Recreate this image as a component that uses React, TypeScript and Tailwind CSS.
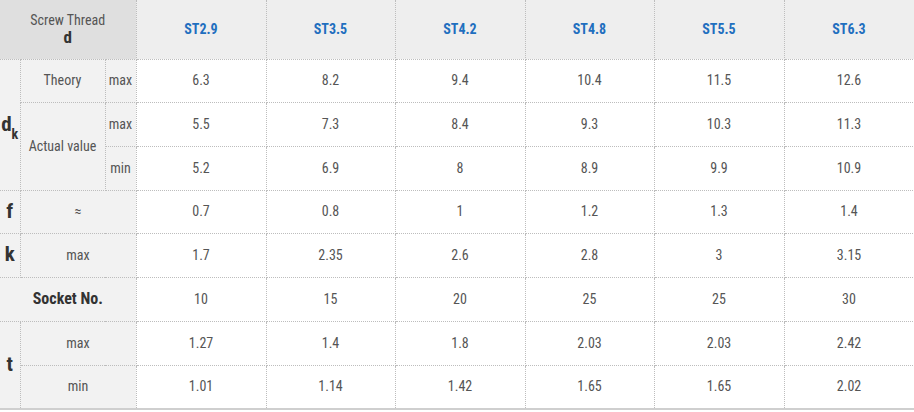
import React from 'react';

const sizes = ['ST2.9', 'ST3.5', 'ST4.2', 'ST4.8', 'ST5.5', 'ST6.3'];

const rows: Record<string, string[]> = {
    theory: ['6.3', '8.2', '9.4', '10.4', '11.5', '12.6'],
    actualMax: ['5.5', '7.3', '8.4', '9.3', '10.3', '11.3'],
    actualMin: ['5.2', '6.9', '8', '8.9', '9.9', '10.9'],
    f: ['0.7', '0.8', '1', '1.2', '1.3', '1.4'],
    k: ['1.7', '2.35', '2.6', '2.8', '3', '3.15'],
    socket: ['10', '15', '20', '25', '25', '30'],
    tMax: ['1.27', '1.4', '1.8', '2.03', '2.03', '2.42'],
    tMin: ['1.01', '1.14', '1.42', '1.65', '1.65', '2.02'],
};

const cell = 'border border-dotted border-[#bdbdbd] text-center align-middle';
const label = `${cell} bg-[#f2f2f2] text-[#555] text-[14px]`;
const big = `${cell} bg-[#f2f2f2] text-[#333] text-[21px] font-bold`;

const Values: React.FC<{ data: string[] }> = ({ data }) => (
    <>
        {data.map((v, i) => (
            <td key={i} className={`${cell} bg-white text-[#555] text-[14px]`}>
                {v}
            </td>
        ))}
    </>
);

export default function App() {
    return (
        <div
            className="w-[914px] h-[412px] bg-white overflow-hidden"
            style={{ fontFamily: '"Liberation Sans Narrow", "Roboto Condensed", "Liberation Sans", Arial, sans-serif' }}
        >
            <table className="w-[914px] table-fixed border-collapse border-b-2 border-b-[#cfcfcf]">
                <colgroup>
                    <col className="w-[20px]" />
                    <col className="w-[85px]" />
                    <col className="w-[31px]" />
                    <col className="w-[130px]" />
                    <col className="w-[129px]" />
                    <col className="w-[130px]" />
                    <col className="w-[129px]" />
                    <col className="w-[130px]" />
                    <col className="w-[130px]" />
                </colgroup>
                <thead>
                    <tr className="h-[59px]">
                        <th colSpan={3} className={`${cell} border-t-0 border-l-0 bg-[#dfdfdf] font-normal leading-[17px]`}>
                            <div className="text-[14px] text-[#555]">Screw Thread</div>
                            <div className="text-[17px] font-bold text-[#333]">d</div>
                        </th>
                        {sizes.map((s) => (
                            <th key={s} className={`${cell} border-t-0 bg-[#eeeeee] text-[14px] font-bold text-[#1f6fbf]`}>
                                {s}
                            </th>
                        ))}
                    </tr>
                </thead>
                <tbody>
                    <tr className="h-[43px]">
                        <td rowSpan={3} className={`${big} border-l-0`}>
                            d<sub className="text-[14px] align-[-5px]">k</sub>
                        </td>
                        <td className={label}>Theory</td>
                        <td className={label}>max</td>
                        <Values data={rows.theory} />
                    </tr>
                    <tr className="h-[44px]">
                        <td rowSpan={2} className={label}>Actual value</td>
                        <td className={label}>max</td>
                        <Values data={rows.actualMax} />
                    </tr>
                    <tr className="h-[44px]">
                        <td className={label}>min</td>
                        <Values data={rows.actualMin} />
                    </tr>
                    <tr className="h-[43px]">
                        <td className={`${big} border-l-0`}>f</td>
                        <td colSpan={2} className={`${label} text-[10px]`}>≈</td>
                        <Values data={rows.f} />
                    </tr>
                    <tr className="h-[44px]">
                        <td className={`${big} border-l-0`}>k</td>
                        <td colSpan={2} className={label}>max</td>
                        <Values data={rows.k} />
                    </tr>
                    <tr className="h-[44px]">
                        <td colSpan={3} className={`${cell} border-l-0 bg-[#f2f2f2] text-[16px] font-bold text-[#333]`}>
                            Socket No.
                        </td>
                        <Values data={rows.socket} />
                    </tr>
                    <tr className="h-[44px]">
                        <td rowSpan={2} className={`${big} border-l-0`}>t</td>
                        <td colSpan={2} className={label}>max</td>
                        <Values data={rows.tMax} />
                    </tr>
                    <tr className="h-[44px]">
                        <td colSpan={2} className={label}>min</td>
                        <Values data={rows.tMin} />
                    </tr>
                </tbody>
            </table>
        </div>
    );
}
